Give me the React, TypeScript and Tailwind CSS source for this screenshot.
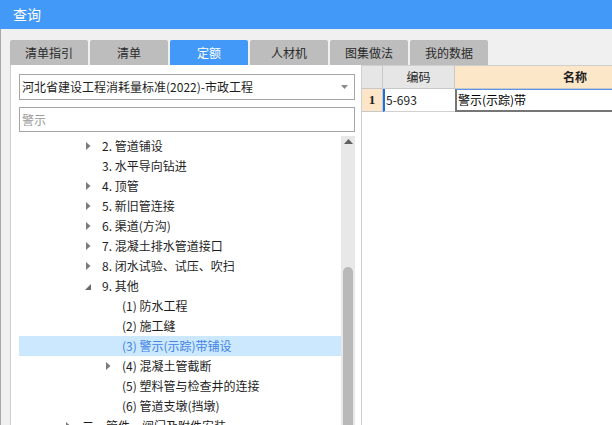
import React from 'react';

type Node = { label: string; level: 0 | 1 | 2; arrow?: 'closed' | 'open'; selected?: boolean };

const TABS = ['清单指引', '清单', '定额', '人材机', '图集做法', '我的数据'];

const TREE: Node[] = [
  { label: '2. 管道铺设', level: 1, arrow: 'closed' },
  { label: '3. 水平导向钻进', level: 1 },
  { label: '4. 顶管', level: 1, arrow: 'closed' },
  { label: '5. 新旧管连接', level: 1, arrow: 'closed' },
  { label: '6. 渠道(方沟)', level: 1, arrow: 'closed' },
  { label: '7. 混凝土排水管道接口', level: 1, arrow: 'closed' },
  { label: '8. 闭水试验、试压、吹扫', level: 1, arrow: 'closed' },
  { label: '9. 其他', level: 1, arrow: 'open' },
  { label: '(1) 防水工程', level: 2 },
  { label: '(2) 施工缝', level: 2 },
  { label: '(3) 警示(示踪)带铺设', level: 2, selected: true },
  { label: '(4) 混凝土管截断', level: 2, arrow: 'closed' },
  { label: '(5) 塑料管与检查井的连接', level: 2 },
  { label: '(6) 管道支墩(挡墩)', level: 2 },
  { label: '二、管件、阀门及附件安装', level: 0, arrow: 'closed' },
];

const PAD = ['pl-[43px]', 'pl-[63px]', 'pl-[83px]'];

function Arrow({ kind }: { kind?: 'closed' | 'open' }) {
  if (kind === 'closed')
    return (
      <svg width="5" height="8" viewBox="0 0 5 8" className="ml-[4px]">
        <polygon points="0,0 4.5,4 0,8" fill="#7b7b7b" />
      </svg>
    );
  if (kind === 'open')
    return (
      <svg width="7" height="7" viewBox="0 0 7 7" className="ml-[3px] mt-[2px]">
        <polygon points="6,0 6,6 0,6" fill="#6a6a6a" />
      </svg>
    );
  return null;
}

export default function App() {
  return (
    <div className="w-[612px] h-[425px] overflow-hidden bg-[#f0f0f0] font-['Noto_Sans_CJK_SC',sans-serif] text-[12px] text-[#1e1e1e] flex flex-col">
      <div className="h-[29px] shrink-0 bg-[#4299f8] text-white text-[14px] pl-[13px] flex items-center">查询</div>

      <div className="flex-1 flex flex-col border-l border-[#a9a9a9] min-h-0">
        <div className="h-[36px] shrink-0 pt-[11px] pl-[9px] flex gap-[2px]">
          {TABS.map((t) => (
            <div
              key={t}
              className={
                t === '定额'
                  ? 'w-[78px] h-[25px] rounded-t-[2px] bg-[#4299f8] text-white flex items-center justify-center text-[12px]'
                  : 'w-[78px] h-[25px] rounded-t-[2px] bg-[#bdbdbd] text-[#2a2a2a] flex items-center justify-center text-[12px]'
              }
            >
              {t}
            </div>
          ))}
        </div>

        <div className="flex-1 flex min-h-0 pl-[9px]">
          {/* left panel */}
          <div className="w-[352px] shrink-0 bg-white border-l border-r border-[#cfcfcf] pl-[8px] pr-[6px] pt-[9px] flex flex-col min-h-0">
            <div className="h-[26px] shrink-0 border border-[#a6a6a6] flex items-center pl-[2px] pr-[6px]">
              <span className="flex-1">河北省建设工程消耗量标准(2022)-市政工程</span>
              <svg width="7" height="4" viewBox="0 0 7 4">
                <polygon points="0,0 7,0 3.5,4" fill="#8a8a8a" />
              </svg>
            </div>
            <div className="h-[25px] shrink-0 mt-[7px] border border-[#a6a6a6] flex items-center pl-[2px] text-[#9a9a9a]">警示</div>
            <div className="flex-1 flex mt-[4px] min-h-0">
              <div className="flex-1 overflow-hidden">
                {TREE.map((n) => (
                  <div
                    key={n.label}
                    className={`h-[20px] flex items-center ${PAD[n.level]} ${n.selected ? 'bg-[#cce8ff] text-[#3f83e4]' : ''}`}
                  >
                    <div className="w-[20px] h-[20px] flex items-center">
                      <Arrow kind={n.arrow} />
                    </div>
                    <span className="whitespace-nowrap">{n.label}</span>
                  </div>
                ))}
              </div>
              <div className="w-[14px] shrink-0 bg-[#e8e8e8] flex flex-col items-center">
                <svg width="9" height="5" viewBox="0 0 9 5" className="mt-[3px]">
                  <polygon points="4.5,0 9,5 0,5" fill="#606060" />
                </svg>
                <div className="w-[10px] flex-1 mt-[123px] bg-[#b9b9b9] rounded-t-[5px]" />
              </div>
            </div>
          </div>

          {/* right panel */}
          <div className="flex-1 bg-white border-t border-[#cfcfcf] overflow-hidden">
            <div className="flex w-[340px] h-[23px] border-b border-[#c8c8c8]">
              <div className="w-[21px] shrink-0 bg-[#e6e6e6] border-r border-[#c8c8c8]" />
              <div className="w-[72px] shrink-0 bg-[#e6e6e6] border-r border-[#c8c8c8] flex items-center justify-center">编码</div>
              <div className="w-[240px] shrink-0 bg-[#fde7c9] flex items-center justify-center font-bold">名称</div>
            </div>
            <div className="flex w-[340px] h-[23px]">
              <div className="w-[21px] shrink-0 bg-[#fde6c8] border-r border-b border-[#c8c8c8] flex items-center justify-center font-['Liberation_Serif',serif] font-bold text-[13px]">1</div>
              <div className="w-[72px] shrink-0 border-l-2 border-[#1a6fe6] border-b border-b-[#d0d0d0] flex items-center pl-[1px]">5-693</div>
              <div className="w-[240px] shrink-0 border-l-2 border-l-[#767676] border-b-2 border-b-[#767676] border-t border-t-[#5b95e6] flex items-center pl-[1px] text-black">警示(示踪)带</div>
            </div>
          </div>
        </div>
      </div>
    </div>
  );
}
